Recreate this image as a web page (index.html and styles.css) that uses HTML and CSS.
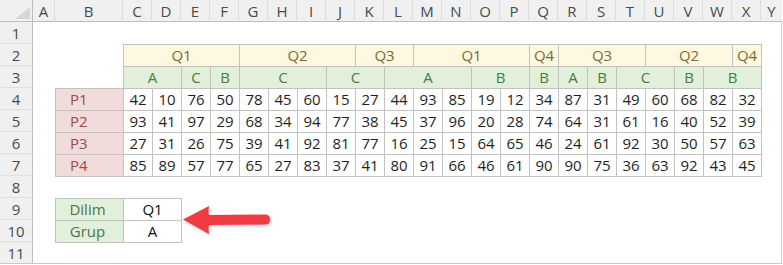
FILE: index.html
```html
<!DOCTYPE html>
<html lang="tr">
<head>
<meta charset="utf-8">
<title>Sheet</title>
<link rel="stylesheet" href="styles.css">
</head>
<body>
<div class="sheet">
  <div class="corner"><span class="tri"></span></div>
  <div class="ch">A</div><div class="ch">B</div><div class="ch">C</div><div class="ch">D</div><div class="ch">E</div><div class="ch">F</div><div class="ch">G</div><div class="ch">H</div><div class="ch">I</div><div class="ch">J</div><div class="ch">K</div><div class="ch">L</div><div class="ch">M</div><div class="ch">N</div><div class="ch">O</div><div class="ch">P</div><div class="ch">Q</div><div class="ch">R</div><div class="ch">S</div><div class="ch">T</div><div class="ch">U</div><div class="ch">V</div><div class="ch">W</div><div class="ch">X</div><div class="ch last">Y</div>

  <div class="rh">1</div><div class="blank s25"></div>

  <div class="rh">2</div><div class="blank s2"></div>
  <div class="c q s4">Q1</div><div class="c q s4">Q2</div><div class="c q s2">Q3</div><div class="c q s4">Q1</div><div class="c q">Q4</div><div class="c q s3">Q3</div><div class="c q s3">Q2</div><div class="c q">Q4</div>
  <div class="blank"></div>

  <div class="rh">3</div><div class="blank s2"></div>
  <div class="c g s2">A</div><div class="c g">C</div><div class="c g">B</div><div class="c g s3">C</div><div class="c g s2">C</div><div class="c g s3">A</div><div class="c g s2">B</div><div class="c g">B</div><div class="c g">A</div><div class="c g">B</div><div class="c g s2">C</div><div class="c g">B</div><div class="c g s2">B</div>
  <div class="blank"></div>

  <div class="rh">4</div><div class="blank"></div><div class="c p">P1</div>
  <div class="c">42</div><div class="c">10</div><div class="c">76</div><div class="c">50</div><div class="c">78</div><div class="c">45</div><div class="c">60</div><div class="c">15</div><div class="c">27</div><div class="c">44</div><div class="c">93</div><div class="c">85</div><div class="c">19</div><div class="c">12</div><div class="c">34</div><div class="c">87</div><div class="c">31</div><div class="c">49</div><div class="c">60</div><div class="c">68</div><div class="c">82</div><div class="c">32</div>
  <div class="blank"></div>

  <div class="rh">5</div><div class="blank"></div><div class="c p">P2</div>
  <div class="c">93</div><div class="c">41</div><div class="c">97</div><div class="c">29</div><div class="c">68</div><div class="c">34</div><div class="c">94</div><div class="c">77</div><div class="c">38</div><div class="c">45</div><div class="c">37</div><div class="c">96</div><div class="c">20</div><div class="c">28</div><div class="c">74</div><div class="c">64</div><div class="c">31</div><div class="c">61</div><div class="c">16</div><div class="c">40</div><div class="c">52</div><div class="c">39</div>
  <div class="blank"></div>

  <div class="rh">6</div><div class="blank"></div><div class="c p">P3</div>
  <div class="c">27</div><div class="c">31</div><div class="c">26</div><div class="c">75</div><div class="c">39</div><div class="c">41</div><div class="c">92</div><div class="c">81</div><div class="c">77</div><div class="c">16</div><div class="c">25</div><div class="c">15</div><div class="c">64</div><div class="c">65</div><div class="c">46</div><div class="c">24</div><div class="c">61</div><div class="c">92</div><div class="c">30</div><div class="c">50</div><div class="c">57</div><div class="c">63</div>
  <div class="blank"></div>

  <div class="rh">7</div><div class="blank"></div><div class="c p">P4</div>
  <div class="c">85</div><div class="c">89</div><div class="c">57</div><div class="c">77</div><div class="c">65</div><div class="c">27</div><div class="c">83</div><div class="c">37</div><div class="c">41</div><div class="c">80</div><div class="c">91</div><div class="c">66</div><div class="c">46</div><div class="c">61</div><div class="c">90</div><div class="c">90</div><div class="c">75</div><div class="c">36</div><div class="c">63</div><div class="c">92</div><div class="c">43</div><div class="c">45</div>
  <div class="blank"></div>

  <div class="rh">8</div><div class="blank s25"></div>

  <div class="rh">9</div><div class="blank"></div><div class="c g2">Dilim</div><div class="c v s2">Q1</div><div class="blank s21"></div>

  <div class="rh">10</div><div class="blank"></div><div class="c g2">Grup</div><div class="c v s2">A</div><div class="blank s21"></div>

  <div class="rh lastrow">11</div><div class="blank s25 lastrow"></div>

  <svg class="arrow" width="92" height="34" viewBox="0 0 92 34">
    <defs>
      <filter id="sh" x="-10%" y="-20%" width="130%" height="150%">
        <feDropShadow dx="1" dy="1.5" stdDeviation="1.2" flood-color="#000" flood-opacity="0.25"/>
      </filter>
    </defs>
    <g filter="url(#sh)" fill="#ef3a43">
      <path d="M2 16.5 L28 3 Q27 10 28 12 L84 11.5 Q89 11.5 89 16.5 Q89 21.5 84 21.5 L28 22 Q27 25 28 31 Z"/>
    </g>
  </svg>
</div>
</body>
</html>
```

FILE: styles.css
```css
* { box-sizing: border-box; }
html, body { margin: 0; padding: 0; background: #ffffff; }
body {
  font-family: "Open Sans", "Noto Sans", "Liberation Sans", sans-serif;
  font-size: 15px;
  color: #1f1f1f;
}
.sheet {
  position: relative;
  width: 782px;
  display: grid;
  grid-template-columns: 33px 22px 68px repeat(22, 29px) 21px;
  grid-template-rows: repeat(12, 22px);
  border-right: 1px solid #cfcfcf;
  background: #ffffff;
}
.corner {
  position: relative;
  background: #f0f0f0;
  border-right: 1px solid #bdbdbd;
  border-bottom: 1px solid #bdbdbd;
}
.tri {
  position: absolute;
  right: 2px;
  bottom: 2px;
  width: 0;
  height: 0;
  border-left: 15px solid transparent;
  border-bottom: 12px solid #d6d6d6;
}
.ch {
  background: #f0f0f0;
  border-bottom: 1px solid #bdbdbd;
  border-right: 1px solid #dcdcdc;
  color: #4a4a4a;
  display: flex;
  align-items: center;
  justify-content: center;
  font-size: 15px;
}
.ch.last { border-right: none; }
.rh {
  grid-column: 1;
  background: #f0f0f0;
  border-right: 1px solid #bdbdbd;
  border-bottom: 1px solid #e0e0e0;
  color: #4a4a4a;
  display: flex;
  align-items: center;
  justify-content: center;
  font-size: 15px;
}
.lastrow { border-bottom: 1px solid #c8c8c8; }
.blank { background: transparent; }
.s2 { grid-column: span 2; }
.s3 { grid-column: span 3; }
.s4 { grid-column: span 4; }
.s21 { grid-column: span 21; }
.s25 { grid-column: span 25; }
.c {
  border: 1px solid #c2c2c2;
  margin: 0 -1px -1px 0;
  display: flex;
  align-items: center;
  justify-content: center;
  background: #ffffff;
  color: #1f1f1f;
  padding-bottom: 1px;
}
.q { background: #fef8e0; color: #7d6a35; }
.g { background: #e2efda; color: #44803d; }
.g2 { background: #e2efda; color: #4f7245; padding-right: 4px; }
.p {
  background: #f2dcdb;
  color: #a04a4a;
  justify-content: flex-start;
  padding-left: 14px;
}
.v { color: #111111; }
.arrow {
  position: absolute;
  left: 181px;
  top: 203px;
}
```
